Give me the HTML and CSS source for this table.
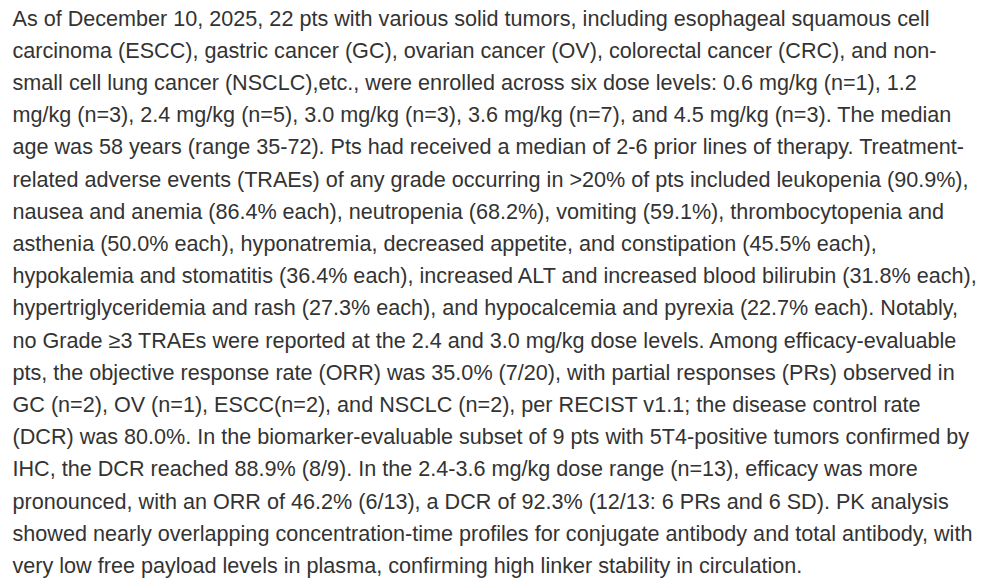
FILE: index.html
```html
<!DOCTYPE html>
<html>
<head>
<meta charset="utf-8">
<link rel="stylesheet" href="styles.css">
</head>
<body>
<p class="abstract">As of December 10, 2025, 22 pts with various solid tumors, including esophageal squamous cell<br>carcinoma (ESCC), gastric cancer (GC), ovarian cancer (OV), colorectal cancer (CRC), and non-<br>small cell lung cancer (NSCLC),etc., were enrolled across six dose levels: 0.6 mg/kg (n=1), 1.2<br>mg/kg (n=3), 2.4 mg/kg (n=5), 3.0 mg/kg (n=3), 3.6 mg/kg (n=7), and 4.5 mg/kg (n=3). The median<br>age was 58 years (range 35-72). Pts had received a median of 2-6 prior lines of therapy. Treatment-<br>related adverse events (TRAEs) of any grade occurring in &gt;20% of pts included leukopenia (90.9%),<br>nausea and anemia (86.4% each), neutropenia (68.2%), vomiting (59.1%), thrombocytopenia and<br>asthenia (50.0% each), hyponatremia, decreased appetite, and constipation (45.5% each),<br>hypokalemia and stomatitis (36.4% each), increased ALT and increased blood bilirubin (31.8% each),<br>hypertriglyceridemia and rash (27.3% each), and hypocalcemia and pyrexia (22.7% each). Notably,<br>no Grade ≥3 TRAEs were reported at the 2.4 and 3.0 mg/kg dose levels. Among efficacy-evaluable<br>pts, the objective response rate (ORR) was 35.0% (7/20), with partial responses (PRs) observed in<br>GC (n=2), OV (n=1), ESCC(n=2), and NSCLC (n=2), per RECIST v1.1; the disease control rate<br>(DCR) was 80.0%. In the biomarker-evaluable subset of 9 pts with 5T4-positive tumors confirmed by<br>IHC, the DCR reached 88.9% (8/9). In the 2.4-3.6 mg/kg dose range (n=13), efficacy was more<br>pronounced, with an ORR of 46.2% (6/13), a DCR of 92.3% (12/13: 6 PRs and 6 SD). PK analysis<br>showed nearly overlapping concentration-time profiles for conjugate antibody and total antibody, with<br>very low free payload levels in plasma, confirming high linker stability in circulation.</p>
</body>
</html>
```
FILE: styles.css
```css
html, body {
  margin: 0;
  padding: 0;
  background: #ffffff;
}
.abstract {
  margin: 0;
  padding: 2.5px 0 0 12.5px;
  white-space: nowrap;
  font-family: "Liberation Sans", Arial, sans-serif;
  font-size: 21.6px;
  line-height: 32.2px;
  color: #333333;
}
```
